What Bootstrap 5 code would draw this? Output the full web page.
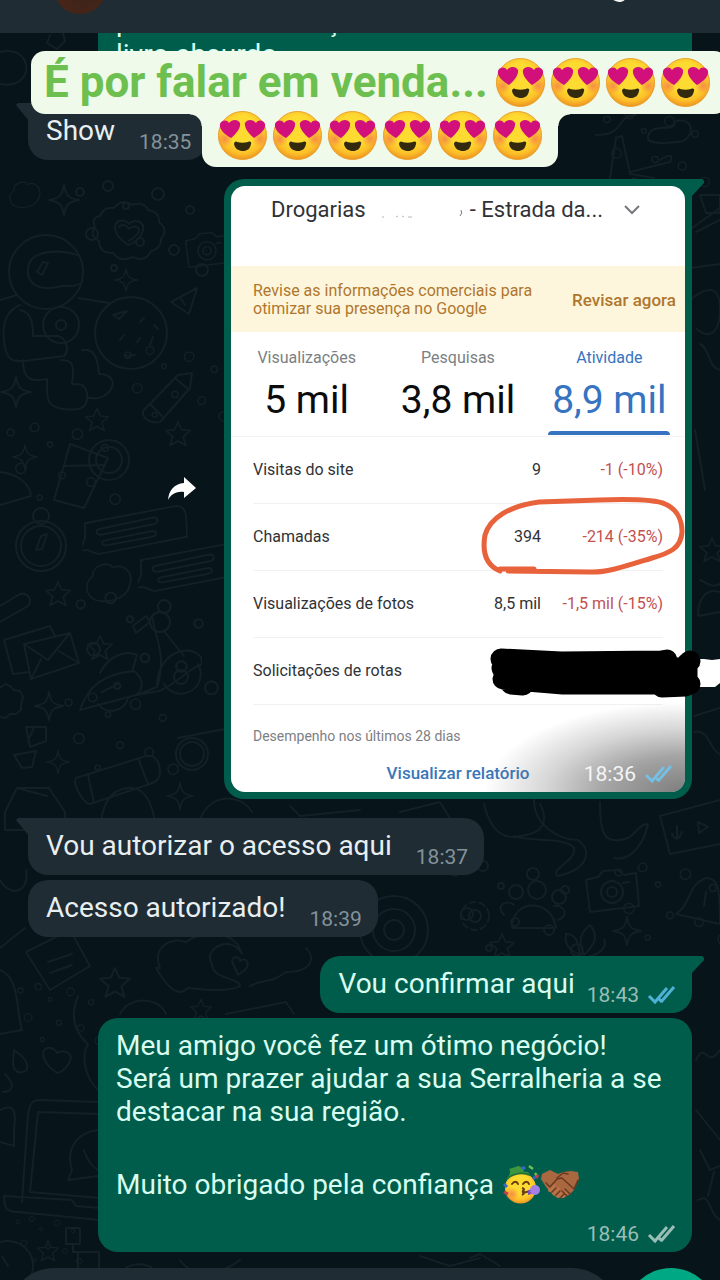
<!DOCTYPE html>
<html lang="pt-BR">
<head>
<meta charset="utf-8">
<meta name="viewport" content="width=device-width, initial-scale=1">
<title>Conversa</title>
<link href="https://cdn.jsdelivr.net/npm/bootstrap@5.3.0/dist/css/bootstrap.min.css" rel="stylesheet">
<style>
  :root { --night:#07141a; --slate:#1f2c34; --leaf:#005d4b; --pale:#effaea; }
  body { font-family: Roboto, "Liberation Sans", sans-serif; background: var(--night); color: #e9eef0; }
  .screen { height: 100vh; isolation: isolate; }
  .wallpaper { z-index: -1; top: 0; left: 0; width: 720px; height: 1280px; fill: none; stroke: #132026; stroke-width: 2; stroke-linejoin: round; stroke-linecap: round; }
  .topbar { height: 33px; background: var(--slate); padding: 0 92px 0 54px; }
  .avatar { width: 52px; height: 52px; margin-bottom: 19px; border-radius: 50%; background: radial-gradient(circle at 60% 60%, #3b241b, #4a2516 70%); }
  .call { margin-bottom: 31px; line-height: 0; }
  .chat { padding: 0 28px; }
  .bubble { position: relative; max-width: 594px; border-radius: 20px; padding: 11px 16px 6px 18px; font-size: 28px; line-height: 33px; }
  .incoming { background: var(--slate); }
  .outgoing { background: var(--leaf); color: #d9fdf0; }
  .words { padding-bottom: 7px; }
  .stamp { font-size: 21px; line-height: 24px; color: #84929a; }
  .outgoing .stamp { color: #99beb7; }
  .gap-far { margin-top: 19px; }
  .gap-near { margin-top: 5px; }
  .tail-in { border-top-left-radius: 0; }
  .tail-out { border-top-right-radius: 0; }
  .tail-in::before, .tail-out::after { content: ""; position: absolute; top: 0; width: 13px; height: 18px; }
  .tail-in::before { left: -12px; background: var(--slate); clip-path: polygon(0 2px, 2px 0, 100% 0, 100% 100%); }
  .tail-out::after { right: -12px; background: var(--leaf); clip-path: polygon(0 0, 11px 0, 100% 2px, 100% 4px, 0 100%); }
  .clipped { margin-top: -39px; width: 594px; }
  .photo { padding: 7px; width: 468px; }
  .long { width: 594px; }
  .thanks { margin-top: 37px; margin-bottom: 18px; }
  .ticks { width: 29px; height: 20px; fill: none; stroke-width: 3; }
  .face-sm { width: 39px; height: 39px; }

  .headline { top: 51px; left: 31px; right: -8px; z-index: 3; }
  .headline h1 { font-size: 44px; line-height: 63px; font-weight: 700; color: #6dc04f; height: 63px; border-radius: 14px; background: var(--pale); padding: 0 15px 0 13px; }
  .headline .face { width: 51px; height: 51px; margin: 0 2px; }
  .second { position: relative; height: 53px; padding: 0 13px; border-radius: 0 0 14px 14px; background: var(--pale); }
  .second .face { margin-top: -4px; }
  .second::before, .second::after { content: ""; position: absolute; top: 0; width: 12px; height: 12px; }
  .second::before { left: -12px; background: radial-gradient(circle at 0 100%, transparent 11px, var(--pale) 12px); }
  .second::after { right: -12px; background: radial-gradient(circle at 100% 100%, transparent 11px, var(--pale) 12px); }

  .report { --ink:#303236; background: #fff; border-radius: 14px; height: 606px; color: var(--ink); overflow: hidden; position: relative; }
  .place { height: 80px; font-size: 22px; line-height: 24px; padding: 12px 44px 0 40px; }
  .place .chevron { margin: 4px 0 0 20px; }
  .notice { height: 66px; background: #fdf6dd; color: #b0762d; font-size: 16px; line-height: 18px; padding: 2px 9px 0 22px; }
  .notice button { color: inherit; font-size: 17px; font-weight: 500; line-height: 18px; }
  .tabs { height: 105px; padding: 15px 0 0; border-bottom: 1px solid #f3f3f4; }
  .tabs button { flex: 1 1 0; color: #7b7f83; font-size: 16px; line-height: 22px; }
  .tabs strong { display: block; color: #0c0c0d; font-weight: 400; font-size: 39px; line-height: 62px; }
  .tabs .on, .tabs .on strong { color: #3673c0; }
  .tabs .on::after { content: ""; display: block; height: 4px; width: 122px; margin: 0 auto; background: #3673c0; border-radius: 4px 4px 0 0; }
  .figures { border-collapse: separate; border-spacing: 0; width: calc(100% - 44px); margin: 0 22px; font-size: 16px; line-height: 20px; }
  .figures th, .figures td { height: 67px; padding: 0; font-weight: 400; border-bottom: 1px solid #f1f1f2; vertical-align: middle; }
  .figures td { text-align: right; }
  .figures td:last-child { width: 122px; color: #c2504f; }
  .period { margin: 21px 22px 0; font-size: 14px; line-height: 20px; color: #7d8084; }
  .report a { font-size: 17px; font-weight: 500; line-height: 20px; color: #3a77b9; margin-top: 17px; }
  .shade { right: 0; bottom: 0; width: 200px; height: 90px; background: radial-gradient(ellipse 100% 100% at 100% 100%, rgba(70,70,70,.7), rgba(90,90,90,.55) 40%, rgba(110,110,110,.28) 70%, transparent); }
  .report .stamp { right: 12px; bottom: 6px; color: #f4f6f6; }
  .scribble { right: -28px; top: 311px; width: 240px; height: 210px; z-index: 2; }

  .composer { height: 92px; margin-top: 16px; padding: 0 3px 0 8px; }
  .composer input { background: var(--slate); border: 0; border-radius: 46px; color: #e9eef0; flex: 1; min-width: 0; padding: 0 40px; }
  .mic { width: 92px; height: 92px; border-radius: 50%; border: 0; background: #00a884; margin-left: 7px; }
</style>
</head>
<body>
<svg class="position-absolute" width="0" height="0" aria-hidden="true">
  <defs>
    <radialGradient id="skin" cx=".5" cy=".4" r=".6"><stop offset=".5" stop-color="#fedb30"/><stop offset=".8" stop-color="#fcc029"/><stop offset="1" stop-color="#ee9321"/></radialGradient>
    <radialGradient id="blush"><stop offset="0" stop-color="#f4804b" stop-opacity=".8"/><stop offset="1" stop-color="#f4804b" stop-opacity="0"/></radialGradient>
    <symbol id="love" viewBox="0 0 51 51">
      <circle cx="25.500" cy="25.500" r="24" fill="url(#skin)" stroke="#e9a02a" stroke-width="1"/>
      <circle cx="8" cy="29" r="8" fill="url(#blush)"/><circle cx="43" cy="29" r="8" fill="url(#blush)"/>
      <path d="M14 28C7 24 2 19 3 14c1-4 7-5 9-1 3-4 9-4 11 0 1 5-4 11-9 15z" fill="#d1107c"/>
      <path d="M37 28c-5-4-10-10-9-15 2-4 8-4 11 0 2-4 8-3 9 1 1 5-4 10-11 14z" fill="#d1107c"/>
      <path d="M17 34c0-2 2-3 3-2 4 1 7 1 11 0 2-1 4 0 3 2-1 5-4 7-8 7s-8-2-9-7z" fill="#33290f"/>
    </symbol>
    <symbol id="party" viewBox="0 0 39 39">
      <circle cx="18.500" cy="23" r="15.500" fill="url(#skin)"/>
      <circle cx="10" cy="29" r="7" fill="url(#blush)"/>
      <path d="M5 14c5-5 16-7 23-4-1-3-3-4-6-3-1-4-4-6-6-6-2 1-6 2-9 3 2 2 1 6-2 10z" fill="#3d9640"/>
      <path d="M5 14c6-6 16-7 23-4" stroke="#237334" stroke-width="2" fill="none"/>
      <path d="M10 19c2-3 5-3 6 0M21 19c2-3 5-3 6 0" stroke="#6a3b13" stroke-width="2" fill="none" stroke-linecap="round"/>
      <path d="M20 23c4 1 1 3 0 3 4 1 2 3 0 4M20 28l9-2" stroke="#69421c" stroke-width="2" fill="none"/>
      <path d="M26 25l7-1v4l-7 2z" fill="#7f51b8"/><circle cx="33" cy="25" r="5" fill="#a67ee6"/>
      <path d="M27 1l4 3M33 8l2 3" stroke="#67c051" stroke-width="2.500"/><path d="M20 2l3 2M31 12l2 2M2 19l3 3" stroke="#3a65c6" stroke-width="3"/><path d="M2 27l4 2M34 13l2-3" stroke="#c23d55" stroke-width="3"/>
    </symbol>
    <symbol id="shake" viewBox="0 0 39 39">
      <path d="M1 9l8-4 8 4 5-2 8-1 7 1 1 7-5 11-5 5-7 3-8-2-8-9-5-8z" fill="#aa6841"/>
      <path d="M9 25l4-4m0 7l4-4m0 7l4-4m1 4l3-3" stroke="#b8734a" stroke-width="4" stroke-linecap="round"/>
      <path d="M5 18l4 4 7-8 5-1 11 10M11 27l4-4M15 30l4-4M20 32l3-3M24 24l5 5M21 26l5 5M16 13l6-5 5 1M33 24l4-9" fill="none" stroke="#6b391f" stroke-width="1.500" stroke-linejoin="round" stroke-linecap="round"/>
    </symbol>
    <symbol id="double" viewBox="0 0 29 20"><path d="M2 11l6 6L20 3M14 17L27 2M12 14l3 3"/></symbol>
    <symbol id="spark" viewBox="-16 -16 32 32"><path d="M0-15C2-4 4-2 15 0 4 2 2 4 0 15-2 4-4 2-15 0-4-2-2-4 0-15z"/></symbol>
    <symbol id="star" viewBox="-16 -16 32 32"><path d="M0-14l4 9 10 1-8 7 3 10-9-5-9 5 3-10-8-7 10-1z"/></symbol>
    <symbol id="camera" viewBox="0 0 56 46"><path d="M2 12l12-3 5-6 15-1 6 5 12-2 3 33-49 6zM39 15l6-1"/><circle cx="28" cy="24" r="11"/><circle cx="28" cy="24" r="5"/></symbol>
    <symbol id="scooter" viewBox="0 0 124 124"><path d="M2 106C10 82 25 70 56 67c10 8 10 18 2 24zM22 69c8-16 24-24 37-18l-5 17M59 91l20-8c0-20 10-32 24-36 12-2 24 4 20 14-13 3-22 18-42 26zM79 83C90 50 75 30 75 14M86 27l20 25M24 88l16-8"/><circle cx="82" cy="18" r="10"/><path d="M20 100a17 17 0 0 0 30-6M86 80a19 19 0 1 0 34-20"/><circle cx="103" cy="73" r="7"/><path d="M55 22l13-10 4 6-14 11z"/></symbol>
    <symbol id="cloud" viewBox="0 0 52 44"><path d="M9 15C8 4 25-2 30 6c10-5 22 4 18 17-2 14-18 19-30 18C2 40-2 23 9 15z"/></symbol>
    <symbol id="note" viewBox="0 0 110 54"><path d="M3 20L98 2c6 0 9 4 10 10l1 22-92 18-11-4-8 0 5-12zM18 26l56-12c6 0 6 6 0 7l-54 11c-6 0-6-5-2-6zm5 12l50-10c5 0 5 5 0 6l-48 9c-5 0-5-4-2-5z"/></symbol>
    <symbol id="bits" viewBox="0 0 140 100"><circle cx="10" cy="12" r="4"/><circle cx="38" cy="6" r="5"/><circle cx="56" cy="26" r="3"/><circle cx="88" cy="14" r="6"/><circle cx="120" cy="30" r="4"/><circle cx="22" cy="54" r="6"/><circle cx="70" cy="62" r="4"/><circle cx="104" cy="70" r="5"/><circle cx="44" cy="88" r="3"/><circle cx="132" cy="90" r="6"/></symbol>
  </defs>
</svg>

<div class="screen position-relative overflow-hidden d-flex flex-column">
  <svg class="wallpaper position-absolute" viewBox="0 0 720 1280" aria-hidden="true">
    <path d="M0 52c18-4 28 6 26 20-4 12-16 14-26 12M50 35l-3 8 10 6 8-8-2-8"/>
    <use href="#cloud" x="8" y="180" width="34" height="30"/><use href="#spark" x="48" y="184" width="32" height="32"/>
    <path d="M100 216q4-10 14-8 8-10 18-3 12-4 16 5 12 2 11 12 10 8 2 17 0 10-10 12-6 12-18 6-12 6-20-4-14 0-14-12-10-6-4-14-4-10 5-11zM115 226c2-8 11-6 14-2 6-6 16-2 14 6-2 8-10 14-15 15-6-4-14-10-13-19zM119 227c4-4 7-2 10 2 4-4 10-3 10 2-2 5-7 8-10 10"/>
    <circle cx="46" cy="272" r="37"/><path d="M80 256c-20-8-50-6-52 12-2 22 20 22 34 18 6 0 12 1 17-2M37 272l6-10 5 1-6 12zM20 305c-14 6-18 18-16 36 2 20 8 22 28 19l32-4c6-6 2-18-6-20H33c0-18-4-24-13-26M23 360c0 20 8 22 24 19 0 16-2 28 16 30 16 2 26 0 24-16-4-12-8-8-15-9 3-20 0-24-11-24M82 350c12-2 16 8 17 24 12 0 18 8 10 18-8 8-14 6-22 6M0 300l17-5M78 298l31 5"/><circle cx="61" cy="325" r="18"/><circle cx="61" cy="325" r="5"/>
    <circle cx="131" cy="333" r="36"/><path d="M113 315l14-4-8 8zM140 322l4-4M154 325l4 4M120 340l4-5M137 342l3-4M150 345l3-8M125 356l10-1"/>
    <use href="#camera" x="184" y="228" width="46" height="44"/><use href="#spark" x="114" y="268" width="24" height="24"/><path d="M171 302l26-14-8 26zM181 299l4 6"/>
    <path d="M143 411l35-36 14-2-2 15-30 34c-10 2-18-4-17-11zM150 404l12 12M175 378l13 11"/><use href="#star" x="84" y="406" width="26" height="28"/><use href="#star" x="164" y="420" width="28" height="28"/><use href="#spark" x="0" y="376" width="32" height="32"/>
    <path d="M70 444l38 14-24 50-30-8zM65 466l38-1"/><circle cx="109" cy="460" r="20"/><circle cx="109" cy="460" r="13"/><use href="#spark" x="12" y="444" width="26" height="26"/><path d="M0 472c18 2 30 12 31 24L0 505"/>
    <use href="#bits" x="70" y="180" width="140" height="100"/><use href="#bits" x="120" y="340" width="110" height="90"/><use href="#bits" x="2" y="420" width="120" height="90"/>
    <circle cx="41" cy="546" r="25"/><circle cx="41" cy="546" r="20"/><circle cx="41" cy="516" r="8"/><path d="M36 550l5-14 6-2-5 15z"/>
    <use href="#note" x="82" y="502" width="106" height="56"/><use href="#note" x="138" y="536" width="106" height="62"/>
    <use href="#cloud" x="84" y="562" width="50" height="42"/><use href="#star" x="44" y="580" width="28" height="28"/><path d="M0 606l20-12c8-2 13 6 8 12L0 622"/>
    <path d="M4 640l46-14 5 10M4 640l9 34 16-2M24 644l46-11 9 30-48 16zM24 644l24 16 22-27M31 679l10-20M79 663l-20-12"/><use href="#star" x="86" y="634" width="28" height="28"/>
    <use href="#scooter" x="78" y="604" width="124" height="124"/><path d="M0 688l5-4 5 2 4 4 6 1 3 6-2 7 0 6-5 4-6 0-4 4-6-1"/>
    <use href="#spark" x="34" y="690" width="30" height="32"/><path d="M26 727l20 0 0 14-16 6zM34 727l-6 14M14 755l22-4-4 16-10 1z"/><use href="#spark" x="46" y="750" width="24" height="24"/>
    <path d="M76 778l70-22c8-1 14 4 14 16 0 6-4 10-10 12l-60 20c-6 0-18-20-14-26zM138 758l10 26M88 775l6 28M101 840c-2-30 6-52 30-52 16 0 24 20 26 52"/><circle cx="192" cy="754" r="16"/><circle cx="192" cy="754" r="12"/><path d="M178 738l52-10M5 812l12-24h32l16 24v18H5zM17 788l30 8"/>
    <use href="#spark" x="166" y="782" width="28" height="28"/><use href="#bits" x="70" y="590" width="150" height="110"/><use href="#bits" x="60" y="690" width="120" height="90"/>
    <path d="M200 820c8-26 40-28 52-8M290 806l10 10 60-6M400 812l40-10 12 20M484 804c10 40 30 34 46 30 14-4 18-14 10-30M534 800c0 26 26 40 44 40 16 12 8 30-20 36-10-6 20-16 16-28-10-12-50-6-60-12"/>
    <path d="M600 802c0 30 4 40 18 38 18 0 18-16 30-16-4 20-18 38-34 34M660 816l60-16M660 816l10 38 50-10M677 826v12m-5-4q5 10 10-2M698 822l10 5-9 6z"/>
    <use href="#camera" x="584" y="868" width="56" height="46"/><path d="M676 914c16-10 10-28 30-36 12 0 14 8 14 46zM706 892l-2 14"/>
    <path d="M512 928c0-30 40-30 44 0zM504 915c-10-10 4-16 10-10M558 920c12-4 6-16-4-14"/><circle cx="537" cy="890" r="9"/><circle cx="516" cy="892" r="7"/><circle cx="559" cy="897" r="7"/>
    <circle cx="394" cy="930" r="34"/><circle cx="394" cy="930" r="21"/><circle cx="394" cy="930" r="10"/><circle cx="475" cy="916" r="14" stroke-dasharray="6 4"/><circle cx="475" cy="916" r="6"/><use href="#spark" x="612" y="916" width="30" height="30"/><use href="#star" x="486" y="932" width="32" height="28"/><path d="M566 934c12 0 12 12 14 20-10-2-16-10-14-20zM590 925c10 12 4 20-6 30-6-14-4-22 6-30zM604 940c4 6-4 14-14 16"/>
    <use href="#bits" x="440" y="860" width="150" height="100"/><use href="#bits" x="610" y="850" width="120" height="110"/>
    <path d="M0 880c12 20 30 10 26-10M0 948l25-20M26 952l44-22 20 36-40 24zM48 962l24-8M50 973l22-8M0 970c20 8 16 40 22 60L0 1034M160 968c-8-20 10-32 26-26 20-14 50-10 56 12-10-20-40-6-30 10 0 16 30 14 28 22-10 6-30 4-52 2-10 10-20 0-32-20zM250 986c20-10 16 0 36-14 26 0 30-14 20-24M232 961c2-6 8-4 8 0 6-4 10 2 6 8l-8 6z"/>
    <use href="#star" x="98" y="966" width="34" height="34"/><use href="#star" x="188" y="998" width="26" height="24"/><path d="M78 996c-8 20-4 36 10 48-8 14-2 40 16 50M120 1014c10-20 40-16 46 0M226 1014l60-12 8 12M43 1053c2-8 11-6 14 0 6-4 14 0 14 5-2 8-8 14-14 15-6-4-14-10-14-20zM14 1050c16 10 18 24 4 22-8-4-4-14-4-22zM5 1074c12 12 6 18-2 18"/>
    <path d="M100 1102l-60-2c-8 0-10 4-12 14l-6 88M100 1114l-62-2-8 80 70 6M4 1196l68 4 4 6 24 2M4 1196c0 14 4 16 14 16l82 8M100 1130c-26 2-34 22-28 40l-4 10 30-4M84 1150q4 14 14 20M0 1110c16-8 16 4 14 20v16l-14-4"/>
    <circle cx="8" cy="1266" r="25"/><path d="M8 1266l-6-10M66 1228h14v16h-14zM73 1244v8h26v16M78 1252v18M120 1280c0-22 40-20 38 0"/><use href="#star" x="36" y="1238" width="24" height="26"/><use href="#bits" x="14" y="970" width="90" height="90"/><use href="#bits" x="8" y="1216" width="80" height="50"/>
    <path d="M596 135c30 0 20-20 40-20M648 140c-2-20 30-6 26-18 24-8 20 22 2 20-12 2-20 2-28-2zM610 178l6-40 6-2 8 38 24 4M630 172l40-10c4-8 0-8-10-2M690 300c24-20 30-6 30 8 0 30-14 30-24 20M700 195h20v18h-14zM690 268l30-4M696 232l24-12M692 228l28-20M695 430l10 60M700 344c10 4 8 24 20 26M700 580c10 4 10 8 20 4M698 616c0-20 10-28 22-24M698 616l22-4M694 716l26-8M694 732c16-4 16 20 26 22"/>
    <use href="#bits" x="580" y="110" width="150" height="80"/><use href="#star" x="698" y="536" width="28" height="28"/>
    <path d="M696 1060c10-20 10 10 24-10M700 1150l10 20 10-4M696 1110l24 30M698 1200c14-8 10 14 22 20M708 1196l6-24M180 1260c10 16 40 16 60 0M420 1256l30 10 30-8M470 1258l10-4 20 12"/>
  </svg>

  <header class="topbar d-flex align-items-end justify-content-between overflow-hidden flex-shrink-0">
    <div class="avatar flex-shrink-0" role="img" aria-label="Foto do contato"></div>
    <svg class="call" width="26" height="26" viewBox="0 0 26 26" role="img" aria-label="Ligar"><path fill="#f1f4f5" d="M6 2l5 5-2 4q2 4 6 6l3-3 6 4c1 6-3 8-7 8C9 25 0 16 0 8q1-5 6-6z"/></svg>
  </header>

  <div class="headline position-absolute d-flex flex-column align-items-center">
    <h1 class="m-0 w-100 d-flex align-items-center text-nowrap"><span>É por falar em venda...</span><span class="d-flex ms-auto" role="img" aria-label="apaixonado">
      <svg class="face"><use href="#love"/></svg><svg class="face"><use href="#love"/></svg><svg class="face"><use href="#love"/></svg><svg class="face"><use href="#love"/></svg></span></h1>
    <div class="second d-flex align-items-start" role="img" aria-label="apaixonado">
      <svg class="face"><use href="#love"/></svg><svg class="face"><use href="#love"/></svg><svg class="face"><use href="#love"/></svg><svg class="face"><use href="#love"/></svg><svg class="face"><use href="#love"/></svg><svg class="face"><use href="#love"/></svg>
    </div>
  </div>

  <main class="chat d-flex flex-column overflow-hidden flex-shrink-0">
    <div class="bubble outgoing clipped align-self-end"><div class="words">porém uma variação<br>livro absurdo</div></div>

    <div class="bubble incoming tail-in gap-far align-self-start d-flex align-items-end">
      <span class="words">Show</span><time class="stamp ms-4">18:35</time>
    </div>

    <div class="gap-far align-self-end d-flex align-items-center">
      <button type="button" class="btn p-0 border-0 me-4" aria-label="Encaminhar"><svg width="34" height="26" viewBox="0 0 34 26"><path fill="#fff" d="M18 1l12 11-12 10v-6C9 15 5 19 2 24 3 14 8 8 18 7z"/></svg></button>
      <div class="bubble outgoing tail-out photo">
        <section class="report d-flex flex-column">
          <div class="place d-flex align-items-start"><span>Drogarias</span>
            <svg class="ms-3" width="82" height="26" viewBox="0 0 82 26" fill="none" stroke="#b5b6b8" aria-hidden="true"><path d="M0 19h2M14 19l2-1M20 18l2 1M26 19h4"/><path d="M79 12q2 3-1 6" stroke="#77797c"/></svg>
            <span class="ms-auto">- Estrada da...</span>
            <svg class="chevron" width="18" height="16" viewBox="0 0 18 16" aria-hidden="true"><path d="M2 4l7 7 7-7" fill="none" stroke="#77797c" stroke-width="2"/></svg></div>
          <div class="notice d-flex align-items-center justify-content-between">
            <span>Revise as informações comerciais para<br>otimizar sua presença no Google</span>
            <button type="button" class="btn p-0 border-0 text-nowrap">Revisar agora</button>
          </div>
          <div class="tabs d-flex align-items-start">
            <button type="button" class="btn p-0 border-0">Visualizações<strong>5 mil</strong></button>
            <button type="button" class="btn p-0 border-0">Pesquisas<strong>3,8 mil</strong></button>
            <button type="button" class="btn p-0 border-0 on">Atividade<strong>8,9 mil</strong></button>
          </div>
          <table class="figures">
            <tbody>
              <tr><th scope="row">Visitas do site</th><td>9</td><td>-1 (-10%)</td></tr>
              <tr><th scope="row">Chamadas</th><td>394</td><td>-214 (-35%)</td></tr>
              <tr><th scope="row">Visualizações de fotos</th><td>8,5 mil</td><td>-1,5 mil (-15%)</td></tr>
              <tr><th scope="row">Solicitações de rotas</th><td></td><td></td></tr>
            </tbody>
          </table>
          <p class="period">Desempenho nos últimos 28 dias</p>
          <a href="#" class="align-self-center text-decoration-none">Visualizar relatório</a>
          <div class="shade position-absolute"></div>
          <div class="stamp position-absolute d-flex align-items-center gap-2"><time>18:36</time><svg class="ticks" stroke="#75bfe2" role="img" aria-label="Lida"><use href="#double"/></svg></div>
        </section>
        <svg class="scribble position-absolute" viewBox="480 490 240 210" aria-hidden="true">
          <path d="M500 569h34M500 571C486 565 482 552 485 535c5-17 24-29 54-33l60-2c30-1 56-1 66 4 12 5 17 16 17 28-1 16-12 21-30 26-26 8-46 15-62 14l-82-1" fill="none" stroke="#e8623c" stroke-width="5" stroke-linecap="round" stroke-linejoin="round"/>
          <path d="M690 659l14 0 8 1 8-1v24l-5 4h-25z" fill="#fff"/>
          <path d="M501 659l60 3 100-1 6-1M503 679l60 5 100 0 24 1M502 668h185v8H506zM511 684l12 1M662 687l24-1M676 674l14-13M676 670l14 14" fill="none" stroke="#000" stroke-width="21" stroke-linecap="round" stroke-linejoin="round"/>
        </svg>
      </div>
    </div>

    <div class="bubble incoming tail-in gap-far align-self-start d-flex align-items-end">
      <span class="words">Vou autorizar o acesso aqui</span><time class="stamp ms-4">18:37</time>
    </div>
    <div class="bubble incoming gap-near align-self-start d-flex align-items-end">
      <span class="words">Acesso autorizado!</span><time class="stamp ms-4">18:39</time>
    </div>

    <div class="bubble outgoing tail-out gap-far align-self-end d-flex align-items-end">
      <span class="words">Vou confirmar aqui</span>
      <span class="stamp ps-2 ms-1 d-flex align-items-center gap-2"><time>18:43</time><svg class="ticks" stroke="#4fb1d6" role="img" aria-label="Lida"><use href="#double"/></svg></span>
    </div>
    <div class="bubble outgoing long gap-near align-self-end">
      <div>Meu amigo você fez um ótimo negócio!<br>Será um prazer ajudar a sua Serralheria a se destacar na sua região.</div>
      <div class="thanks d-flex align-items-center"><span class="me-2">Muito obrigado pela confiança</span><svg class="face-sm" role="img" aria-label="festa"><use href="#party"/></svg><svg class="face-sm" role="img" aria-label="aperto de mão"><use href="#shake"/></svg></div>
      <div class="stamp d-flex align-items-center justify-content-end gap-2"><time>18:46</time><svg class="ticks" stroke="#99beb7" role="img" aria-label="Entregue"><use href="#double"/></svg></div>
    </div>
  </main>

  <footer class="composer d-flex flex-shrink-0">
    <input type="text" aria-label="Mensagem">
    <button type="button" class="mic flex-shrink-0" aria-label="Gravar áudio"></button>
  </footer>
</div>
<script src="https://cdn.jsdelivr.net/npm/bootstrap@5.3.0/dist/js/bootstrap.bundle.min.js"></script>
</body>
</html>
